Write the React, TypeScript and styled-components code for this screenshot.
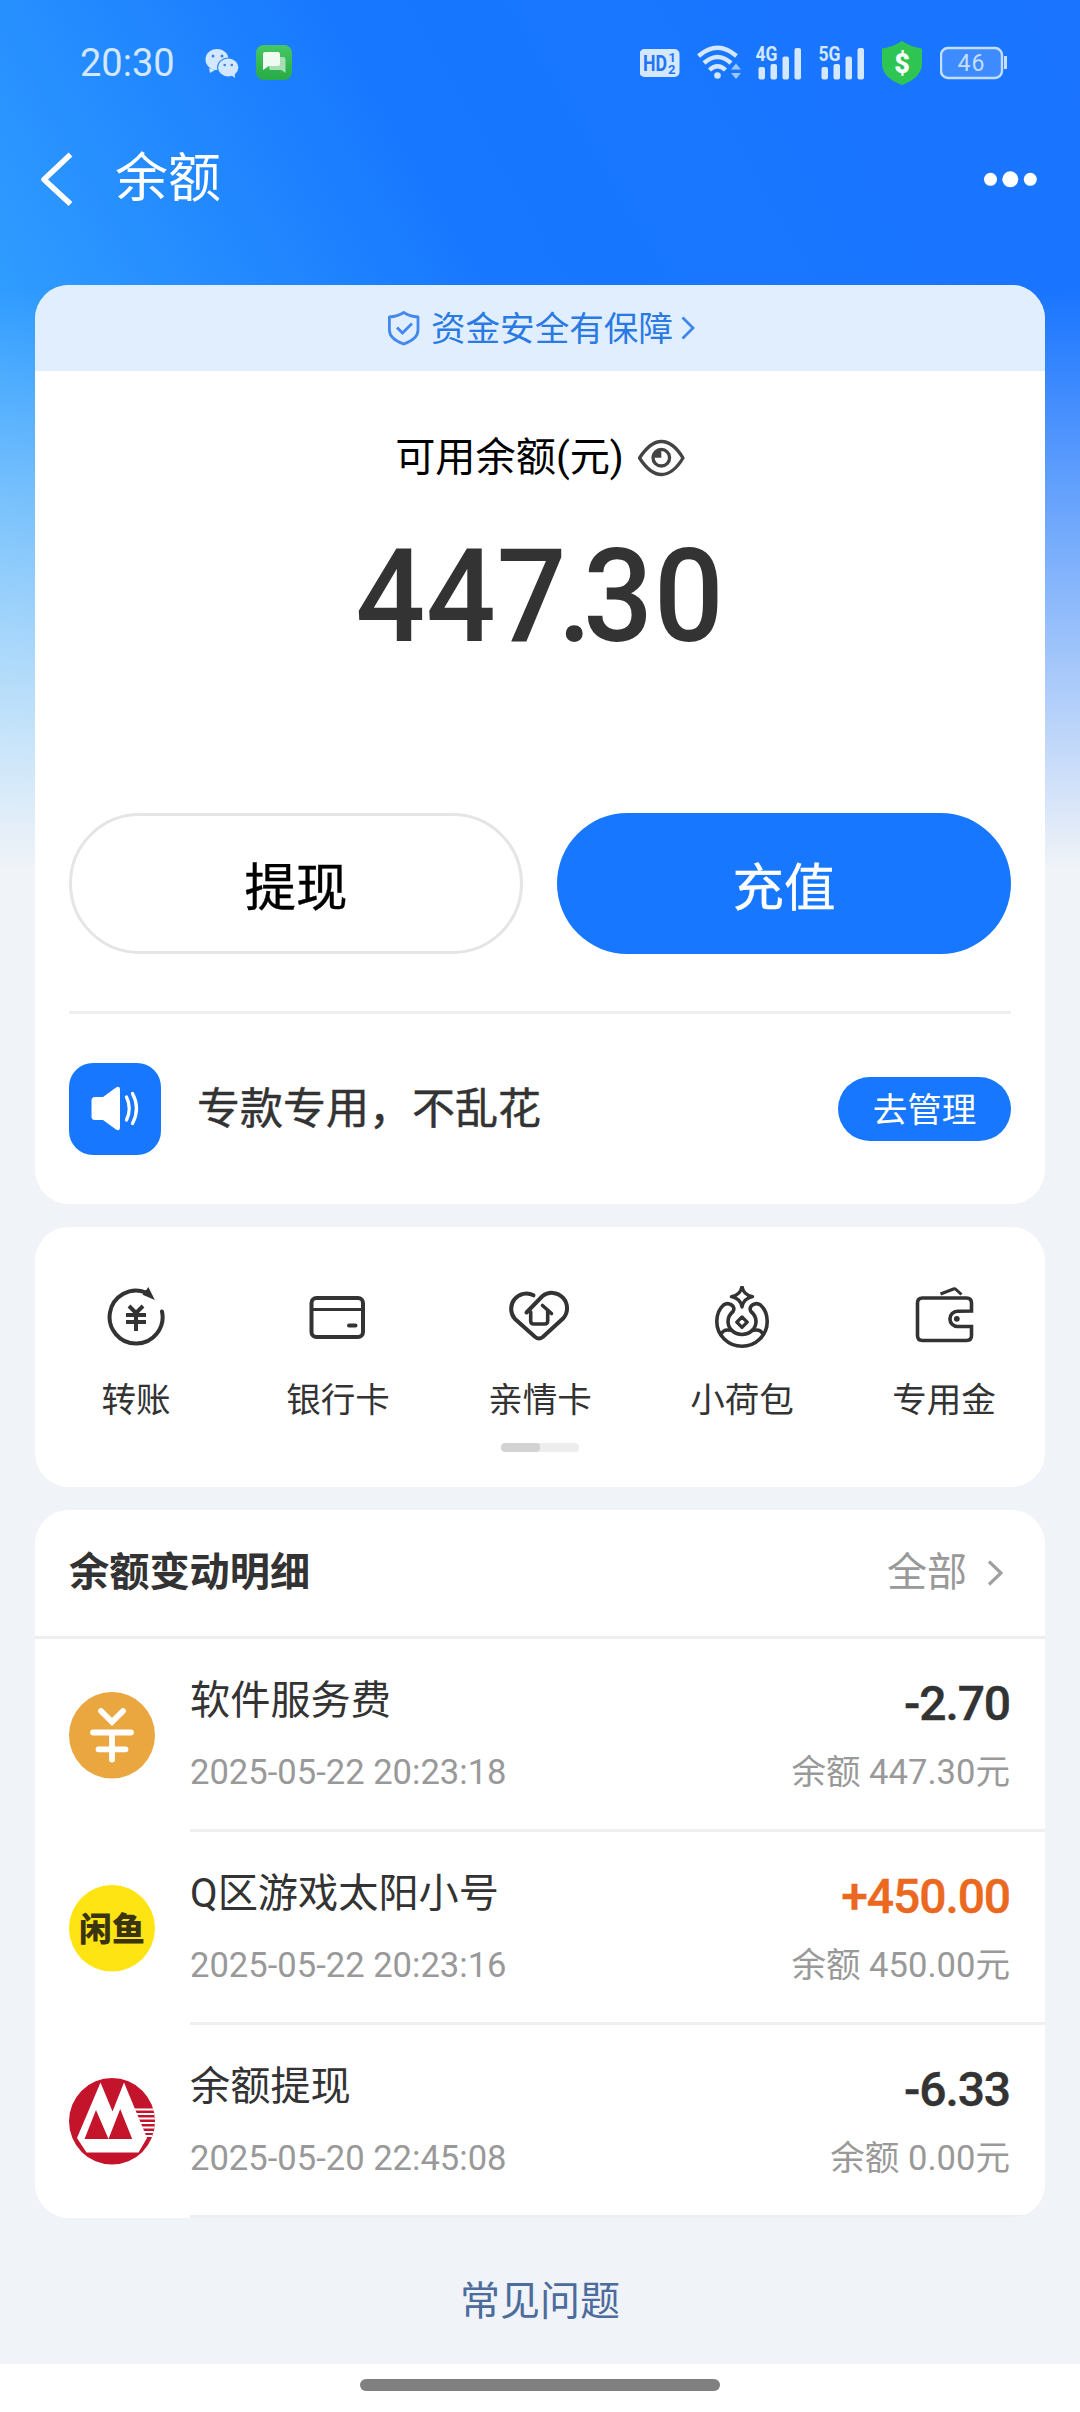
import React from "react";
import styled, { createGlobalStyle } from "styled-components";

const Global = createGlobalStyle`
  * { box-sizing: border-box; }
  body {
    margin: 0;
    font-family: Roboto, "Noto Sans CJK SC", sans-serif;
    color: #333;
  }
  svg { display: block; flex: none; }
`;

const Page = styled.div`
  width: 1080px;
  height: 2412px;
  display: flex;
  flex-direction: column;
  background:
    linear-gradient(180deg, rgba(240, 243, 248, 0) 290px, #f0f3f8 868px) 0 0 / 100% 870px no-repeat,
    linear-gradient(60deg, #3cb6ff 0%, #2f9cff 21.3%, #1777ff 52.6%, #1a74ff 100%) 0 0 / 100% 870px no-repeat,
    #f0f3f8;
`;

const StatusBar = styled.div`
  height: 124px;
  padding: 0 72px 0 80px;
  display: flex;
  align-items: center;
  color: #d3e7ff;
`;

const Clock = styled.span`
  width: 125px;
  font-size: 38px;
  line-height: 60px;
  padding-top: 1px;
`;

const StatusGroup = styled.div<{ $push?: boolean }>`
  display: flex;
  gap: 17px;
  margin-left: ${(p) => (p.$push ? "auto" : "0")};
`;

const NavBar = styled.div`
  height: 161px;
  padding: 28px 41px 0;
  display: flex;
  align-items: flex-start;
`;

const NavTitle = styled.h1`
  flex: 1;
  margin: 0 0 0 42px;
  font-size: 53px;
  line-height: 55px;
  font-weight: 400;
  color: #fff;
`;

const Card = styled.section<{ $height: number; $gap?: number }>`
  height: ${(p) => p.$height}px;
  margin: 0 35px ${(p) => p.$gap ?? 0}px;
  border-radius: 34px;
  background: #fff;
  overflow: hidden;
  flex: none;
  display: flex;
  flex-direction: column;
`;

const SafetyBanner = styled.div`
  height: 86px;
  padding-left: 3px;
  display: flex;
  align-items: center;
  justify-content: center;
  background: #e1eefe;
  color: #2a7ae4;
  font-size: 34.6px;
  line-height: 86px;
`;

const BannerText = styled.span`
  margin: 2px 8px 0 11px;
`;

const BalanceLabel = styled.div`
  margin-top: 57px;
  height: 60px;
  display: flex;
  align-items: center;
  justify-content: center;
  gap: 13px;
  font-size: 40.2px;
  line-height: 60px;
  color: #000;
`;

const Balance = styled.div`
  margin-top: 34px;
  height: 150px;
  text-align: center;
  font-size: 129px;
  line-height: 150px;
  font-weight: 500;
  font-kerning: none;
  letter-spacing: 1px;
  color: #333;
  transform: scaleX(0.95);
`;

const TightPair = styled.span`
  letter-spacing: -9px;
`;

const Actions = styled.div`
  margin: 141px 34px 0;
  display: grid;
  grid-template-columns: 1fr 1fr;
  gap: 34px;
`;

const ActionButton = styled.button<{ $primary?: boolean }>`
  height: 141px;
  padding: 0 0 1px;
  border-radius: 71px;
  border: ${(p) => (p.$primary ? "0" : "3px solid #e5e5e5")};
  background: ${(p) => (p.$primary ? "#1777ff" : "#fff")};
  color: ${(p) => (p.$primary ? "#fff" : "#000")};
  font-family: inherit;
  font-size: 51.5px;
  font-weight: 400;
  -webkit-text-stroke: 0.4px currentColor;
`;

const Notice = styled.div`
  margin: 57px 34px 0;
  border-top: 3px solid #eee;
  padding-top: 49px;
  display: flex;
  align-items: center;
`;

const SpeakerTile = styled.div`
  width: 92px;
  height: 92px;
  border-radius: 24px;
  background: #1777ff;
`;

const NoticeText = styled.span`
  flex: 1;
  margin-left: 36px;
  font-size: 43px;
  line-height: 60px;
  font-weight: 400;
  -webkit-text-stroke: 0.5px currentColor;
`;

const ManageButton = styled.button`
  width: 173px;
  height: 64px;
  padding: 2px 0 0;
  border: 0;
  border-radius: 32px;
  background: #1777ff;
  color: #fff;
  font-family: inherit;
  font-size: 34.6px;
  line-height: 60px;
`;

const Shortcuts = styled.div`
  padding: 59px 0 0;
  display: flex;
  justify-content: space-between;
`;

const Shortcut = styled.div`
  width: 202px;
  display: flex;
  flex-direction: column;
  align-items: center;
  font-size: 34.6px;
  line-height: 46px;
  gap: 27px;
`;

const Pager = styled.div`
  width: 78px;
  height: 9px;
  margin: 20px auto 0;
  border-radius: 4px;
  background: #ededed;
  overflow: hidden;
`;

const PagerThumb = styled.div`
  width: 39px;
  height: 9px;
  border-radius: 4px;
  background: #d3d3d3;
`;

const ListHeader = styled.div`
  height: 129px;
  padding: 0 42px 0 34px;
  border-bottom: 3px solid #eee;
  display: flex;
  align-items: center;
`;

const ListTitle = styled.h2`
  flex: 1;
  margin: 0;
  font-size: 40.2px;
  line-height: 60px;
  font-weight: 700;
`;

const AllLink = styled.span`
  margin-right: 20px;
  font-size: 40px;
  line-height: 60px;
  color: #999;
`;

const Row = styled.div`
  height: 193px;
  padding-left: 34px;
  display: flex;
  align-items: center;
  gap: 35px;

  > svg { margin-top: -2px; }
`;

const RowBody = styled.div`
  flex: 1;
  height: 193px;
  padding: 34px 35px 0 0;
  border-bottom: 3px solid #edeff1;
  display: flex;
  justify-content: space-between;
`;

const RowColumn = styled.div<{ $end?: boolean }>`
  display: flex;
  flex-direction: column;
  align-items: ${(p) => (p.$end ? "flex-end" : "flex-start")};
  gap: 20px;
`;

const RowTitle = styled.span`
  font-size: 40.2px;
  line-height: 56px;
`;

const RowMeta = styled.span`
  font-size: 34.6px;
  line-height: 46px;
  color: #999;
`;

const Amount = styled.span<{ $income?: boolean }>`
  font-size: 48px;
  line-height: 62px;
  margin-bottom: -6px;
  font-weight: 500;
  letter-spacing: -1.1px;
  -webkit-text-stroke: 0.4px currentColor;
  color: ${(p) => (p.$income ? "#ea6820" : "#333")};
`;

const Faq = styled.div`
  flex: 1;
  padding-top: 54px;
  text-align: center;
  font-size: 40px;
  line-height: 60px;
  color: #4c6c9c;
`;

const GestureArea = styled.div`
  height: 48px;
  padding-top: 15px;
  background: #fff;
`;

const GestureBar = styled.div`
  width: 360px;
  height: 12px;
  margin: 0 auto;
  border-radius: 6px;
  background: #808080;
`;

const Signal = ({ label }: { label: string }) => (
  <svg width="46" height="60" viewBox="756 32 46 60" fill="currentColor">
    <text x="755.500" y="60.500" fontSize="21" fontWeight="700" textLength="22" lengthAdjust="spacingAndGlyphs">
      {label}
    </text>
    <rect x="758.500" y="67" width="6.500" height="12.500" rx="2" />
    <rect x="770.500" y="64" width="6.500" height="15.500" rx="2" />
    <rect x="782.500" y="56.500" width="6.500" height="23" rx="2" />
    <rect x="794.500" y="48" width="6.500" height="31.500" rx="2" />
  </svg>
);

const WeChatIcon = () => (
  <svg width="34" height="60" viewBox="205 32 34 60">
    <path d="M209 68l1 5 5-3z" fill="#d3e7ff" />
    <ellipse cx="217" cy="59.5" rx="11.5" ry="10.5" fill="#d3e7ff" />
    <ellipse cx="228.2" cy="67.5" rx="11.2" ry="10" fill="#2287ff" />
    <ellipse cx="228.2" cy="67.5" rx="10.1" ry="8.9" fill="#d3e7ff" />
    <path d="M231 75l4 3-.4-5z" fill="#d3e7ff" />
    <circle cx="213" cy="56" r="1.5" fill="#3a85d8" />
    <circle cx="222" cy="56" r="1.5" fill="#3a85d8" />
    <circle cx="224.7" cy="65" r="1.3" fill="#3a85d8" />
    <circle cx="231.8" cy="65" r="1.3" fill="#3a85d8" />
  </svg>
);

const MessageIcon = () => (
  <svg width="36" height="60" viewBox="256 32 36 60">
    <defs>
      <linearGradient id="msg" x1="0" y1="0" x2="0" y2="1">
        <stop offset="0" stopColor="#46c763" />
        <stop offset="1" stopColor="#27ab47" />
      </linearGradient>
    </defs>
    <rect x="256" y="45" width="36" height="35" rx="8" fill="url(#msg)" />
    <path d="M271 57h12q2.500 0 2.500 2v14l-4-3h-10.500q-2 0-2-2z" fill="#a5dfb2" />
    <path d="M265 52h13q2 0 2 2v10q0 2-2 2h-9l-6 4v-16q0-2 2-2z" fill="#effaf1" />
  </svg>
);

const HdIcon = () => (
  <svg width="41" height="60" viewBox="640 32 41 60">
    <rect x="639.500" y="49" width="40" height="28" rx="5" fill="#d3e7ff" />
    <g fill="#1f75f5" fontWeight="700">
      <text x="643" y="71" fontSize="22" textLength="24" lengthAdjust="spacingAndGlyphs">HD</text>
      <text x="668.500" y="61.500" fontSize="13">1</text>
      <text x="668" y="74" fontSize="13">2</text>
    </g>
  </svg>
);

const WifiIcon = () => (
  <svg width="41" height="60" viewBox="698 32 41 60" fill="none" stroke="#d3e7ff" strokeWidth="4.400" overflow="visible">
    <path d="M698.500 56Q717.500 39.500 736.500 56" />
    <path d="M704 63Q717.500 51 731 63" />
    <path d="M709.500 70Q717.500 62.500 725.500 70" />
    <circle cx="717.500" cy="75.500" r="3.300" fill="#d3e7ff" stroke="none" />
    <path d="M731 69.500l5-6 5 6zM731 73l5 6 5-6z" fill="#9cc6ff" stroke="none" />
  </svg>
);

const ShieldMoneyIcon = () => (
  <svg width="41" height="60" viewBox="882 33 41 60">
    <path d="M902 42q9 6 20 7.500v15q0 14-20 21.500-20-7.500-20-21.500v-15q11-1.500 20-7.500z" fill="#2fc552" />
    <text x="902" y="73.500" fontSize="27" fontWeight="900" textAnchor="middle" fill="#fff">$</text>
  </svg>
);

const BatteryIcon = () => (
  <svg width="68" height="60" viewBox="940 33 68 60">
    <rect x="941" y="49" width="61" height="30" rx="7" fill="#3d8bff" stroke="#c3deff" strokeWidth="2.400" />
    <path d="M1005.500 57v13" stroke="#c3deff" strokeWidth="3" />
    <text x="971" y="72" fontSize="23" textAnchor="middle" fill="#c3deff" textLength="27">46</text>
  </svg>
);

const TransferIcon = () => (
  <>
    <path d="M145.500 1292.300A26.500 26.500 0 1 0 162 1311.500" />
    <path d="M148.300 1288.500l5 10-9.500-4z" fill="#333" strokeWidth="1.500" />
    <path d="M129 1306l7 7 7-7M136 1312v19M126 1315h20M126 1322h20" strokeWidth="4" strokeLinecap="butt" />
  </>
);

const BankCardIcon = () => (
  <>
    <rect x="312.500" y="1298" width="51.500" height="39" rx="5" />
    <path d="M312.500 1309.500h51" strokeWidth="3.200" />
    <path d="M350 1325.500h6.500" />
  </>
);

const FamilyHeartIcon = () => (
  <>
    <path d="M533.500 1295.300A15.300 15.300 0 0 0 514.800 1318.800L535.200 1337Q539 1340 542.800 1337L563.500 1318A15.300 15.300 0 0 0 542.500 1296L526.500 1312.500" />
    <path d="M530.700 1312v9q0 3 3 3h11q3 0 3-3v-11M542.500 1305.500l9 8" strokeWidth="3.600" />
  </>
);

const PouchIcon = () => (
  <>
    <path d="M742 1286.500Q743.500 1295 752.500 1296.700 743.500 1298.500 742 1307 740.500 1298.500 731.500 1296.700 740.500 1295 742 1286.500z" strokeWidth="3.400" strokeLinejoin="round" />
    <path d="M723.500 1305C718.500 1309.500 716.800 1315 716.800 1321.500A25.200 24.800 0 0 0 767.200 1321.500C767.200 1315 765.500 1309.500 760.500 1305 755.500 1301.500 747.500 1306 751 1311.500 754 1314 756 1317 756 1321.500A14 13 0 0 1 728 1321.500C728 1317 730 1314 733 1311.500 736.500 1306 728.500 1301.500 723.500 1305z" strokeWidth="3.600" />
    <path d="M742 1317l5.200 5.200-5.200 5.200-5.200-5.200zM721 1334.500Q723.500 1328.500 731 1330.500M763 1334.500Q760.500 1328.500 753 1330.500" strokeWidth="3.300" strokeLinejoin="round" />
  </>
);

const WalletIcon = () => (
  <>
    <path d="M971.500 1311v-8q0-5-5-5h-44q-5 0-5 5v32.500q0 5 5 5h44q5 0 5-5v-9h-14a7.600 7.600 0 0 1 0-15.200z" strokeWidth="3.600" />
    <path d="M940.500 1294l13-5q1.500-.500 2.500.500l5.500 5" strokeWidth="3" strokeLinecap="butt" />
    <circle cx="956.800" cy="1318.800" r="2.900" fill="#333" stroke="none" />
  </>
);

const shortcuts = [
  { label: "转账", cx: 136, Icon: TransferIcon },
  { label: "银行卡", cx: 339, Icon: BankCardIcon },
  { label: "亲情卡", cx: 540, Icon: FamilyHeartIcon },
  { label: "小荷包", cx: 742, Icon: PouchIcon },
  { label: "专用金", cx: 944, Icon: WalletIcon },
];

const FeeLogo = () => (
  <svg width="86" height="88" viewBox="69 1691 86 88">
    <ellipse cx="112" cy="1735.300" rx="43" ry="43.300" fill="#eba73f" />
    <path d="M101 1711l11 11 11-11M93 1732.500h38M98.500 1749.300h27M112 1732.500v27" fill="none" stroke="#fff" strokeWidth="5.800" strokeLinecap="round" />
  </svg>
);

const XianyuLogo = () => (
  <svg width="86" height="88" viewBox="69 1884 86 88">
    <ellipse cx="112" cy="1928.300" rx="43" ry="43.300" fill="#ffe414" />
    <text x="79" y="1940.500" fontSize="33" fontWeight="900" fill="#3b3410" textLength="66" lengthAdjust="spacingAndGlyphs">闲鱼</text>
  </svg>
);

const CmbLogo = () => (
  <svg width="86" height="88" viewBox="69 2077 86 88">
    <clipPath id="cmb"><ellipse cx="112" cy="2121.300" rx="43" ry="43.300" /></clipPath>
    <g clipPath="url(#cmb)">
      <rect x="69" y="2077" width="86" height="88" fill="#c4142c" />
      <path d="M100.500 2082.500L112.500 2111.500 124 2082.500 147 2138 138.500 2152.500H86.500L77 2138z" fill="#fff" />
      <path d="M96 2110l12.500 29H84.500zM120.200 2109l12 30H108.500z" fill="#c4142c" />
      <path d="M134 2109.500h22M136 2114h20M138 2118.500h18M139 2123h17M141 2127.500h15M143 2132h12M144 2136h10" stroke="#fff" strokeWidth="2" />
    </g>
  </svg>
);

const records = [
  { title: "软件服务费", time: "2025-05-22 20:23:18", amount: "-2.70", balance: "余额 447.30元", Logo: FeeLogo },
  { title: "Q区游戏太阳小号", time: "2025-05-22 20:23:16", amount: "+450.00", balance: "余额 450.00元", income: true, Logo: XianyuLogo },
  { title: "余额提现", time: "2025-05-20 22:45:08", amount: "-6.33", balance: "余额 0.00元", Logo: CmbLogo },
];

export default function App() {
  return (
    <Page>
      <Global />
      <StatusBar>
        <Clock>20:30</Clock>
        <StatusGroup>
          <WeChatIcon />
          <MessageIcon />
        </StatusGroup>
        <StatusGroup $push>
          <HdIcon />
          <WifiIcon />
          <Signal label="4G" />
          <Signal label="5G" />
          <ShieldMoneyIcon />
          <BatteryIcon />
        </StatusGroup>
      </StatusBar>

      <NavBar>
        <svg width="32" height="54" viewBox="41 152 32 54" fill="none" stroke="#fff" strokeWidth="5.500">
          <path d="M70.500 154.500L44 179.500l26.500 24.500" strokeLinejoin="round" />
        </svg>
        <NavTitle>余额</NavTitle>
        <svg width="56" height="54" viewBox="983 152 56 54" fill="#fff">
          <circle cx="990.500" cy="179.300" r="6.500" />
          <circle cx="1010.300" cy="179.300" r="8" />
          <circle cx="1030.300" cy="179.300" r="6.500" />
        </svg>
      </NavBar>

      <Card $height={919} $gap={23}>
        <SafetyBanner>
          <svg width="32" height="36" viewBox="388 310 32 36" fill="none" stroke="#4388ee" strokeWidth="2.800">
            <path d="M403.700 312.500q6 4 14.300 4.500v13q0 9-14.300 14-14.300-5-14.300-14v-13q8.300-.500 14.300-4.500z" strokeLinejoin="round" />
            <path d="M397 327.500l5.500 5.500 9.500-9.500" />
          </svg>
          <BannerText>资金安全有保障</BannerText>
          <svg width="14" height="24" viewBox="681 316 14 24" fill="none" stroke="#3f86ea" strokeWidth="2.800">
            <path d="M682.500 317.500l10.500 10.500-10.500 10.500" />
          </svg>
        </SafetyBanner>
        <BalanceLabel>
          可用余额(元)
          <svg width="48" height="40" viewBox="636 438 48 40" fill="none" stroke="#444" strokeWidth="3.300">
            <path d="M638.500 458C645 448 652 441.500 660.300 441.500S676 448 682 458C676 468 668.500 474.500 660.300 474.500S645 468 638.500 458z" strokeLinejoin="round" />
            <circle cx="660.300" cy="457.700" r="8.300" />
            <path d="M660.300 457.700v-8.300a8.300 8.300 0 0 0-8.300 8.300z" fill="#444" stroke="none" />
          </svg>
        </BalanceLabel>
        <Balance>
          44<TightPair>7.</TightPair>30
        </Balance>
        <Actions>
          <ActionButton>提现</ActionButton>
          <ActionButton $primary>充值</ActionButton>
        </Actions>
        <Notice>
          <SpeakerTile>
            <svg width="92" height="92" viewBox="69 1063 92 92" fill="none" stroke="#fff" strokeWidth="3.300" strokeLinecap="round">
              <path d="M95 1097h8l13-9.500q4-2 4 2v38q0 4-4 2l-13-9.500h-8q-3.500 0-3.500-3.500v-16q0-3.500 3.500-3.500z" fill="#fff" stroke="none" />
              <path d="M126.500 1097q5.500 11.500 0 23M132.500 1093.500q8 15 0 30" />
            </svg>
          </SpeakerTile>
          <NoticeText>专款专用，不乱花</NoticeText>
          <ManageButton>去管理</ManageButton>
        </Notice>
      </Card>

      <Card $height={260} $gap={23}>
        <Shortcuts>
          {shortcuts.map(({ label, cx, Icon }) => (
            <Shortcut key={label}>
              <svg width="64" height="64" viewBox={`${cx - 32} 1286 64 64`} fill="none" stroke="#333" strokeWidth="4" strokeLinecap="round">
                <Icon />
              </svg>
              {label}
            </Shortcut>
          ))}
        </Shortcuts>
        <Pager>
          <PagerThumb />
        </Pager>
      </Card>

      <Card $height={708}>
        <ListHeader>
          <ListTitle>余额变动明细</ListTitle>
          <AllLink>全部</AllLink>
          <svg width="16" height="26" viewBox="986 1560 16 26" fill="none" stroke="#a0a0a0" strokeWidth="3.200">
            <path d="M988 1561.500l12 11.500-12 11.500" />
          </svg>
        </ListHeader>
        {records.map(({ title, time, amount, balance, income, Logo }) => (
          <Row key={time}>
            <Logo />
            <RowBody>
              <RowColumn>
                <RowTitle>{title}</RowTitle>
                <RowMeta>{time}</RowMeta>
              </RowColumn>
              <RowColumn $end>
                <Amount $income={income}>{amount}</Amount>
                <RowMeta>{balance}</RowMeta>
              </RowColumn>
            </RowBody>
          </Row>
        ))}
      </Card>

      <Faq>常见问题</Faq>
      <GestureArea>
        <GestureBar />
      </GestureArea>
    </Page>
  );
}
